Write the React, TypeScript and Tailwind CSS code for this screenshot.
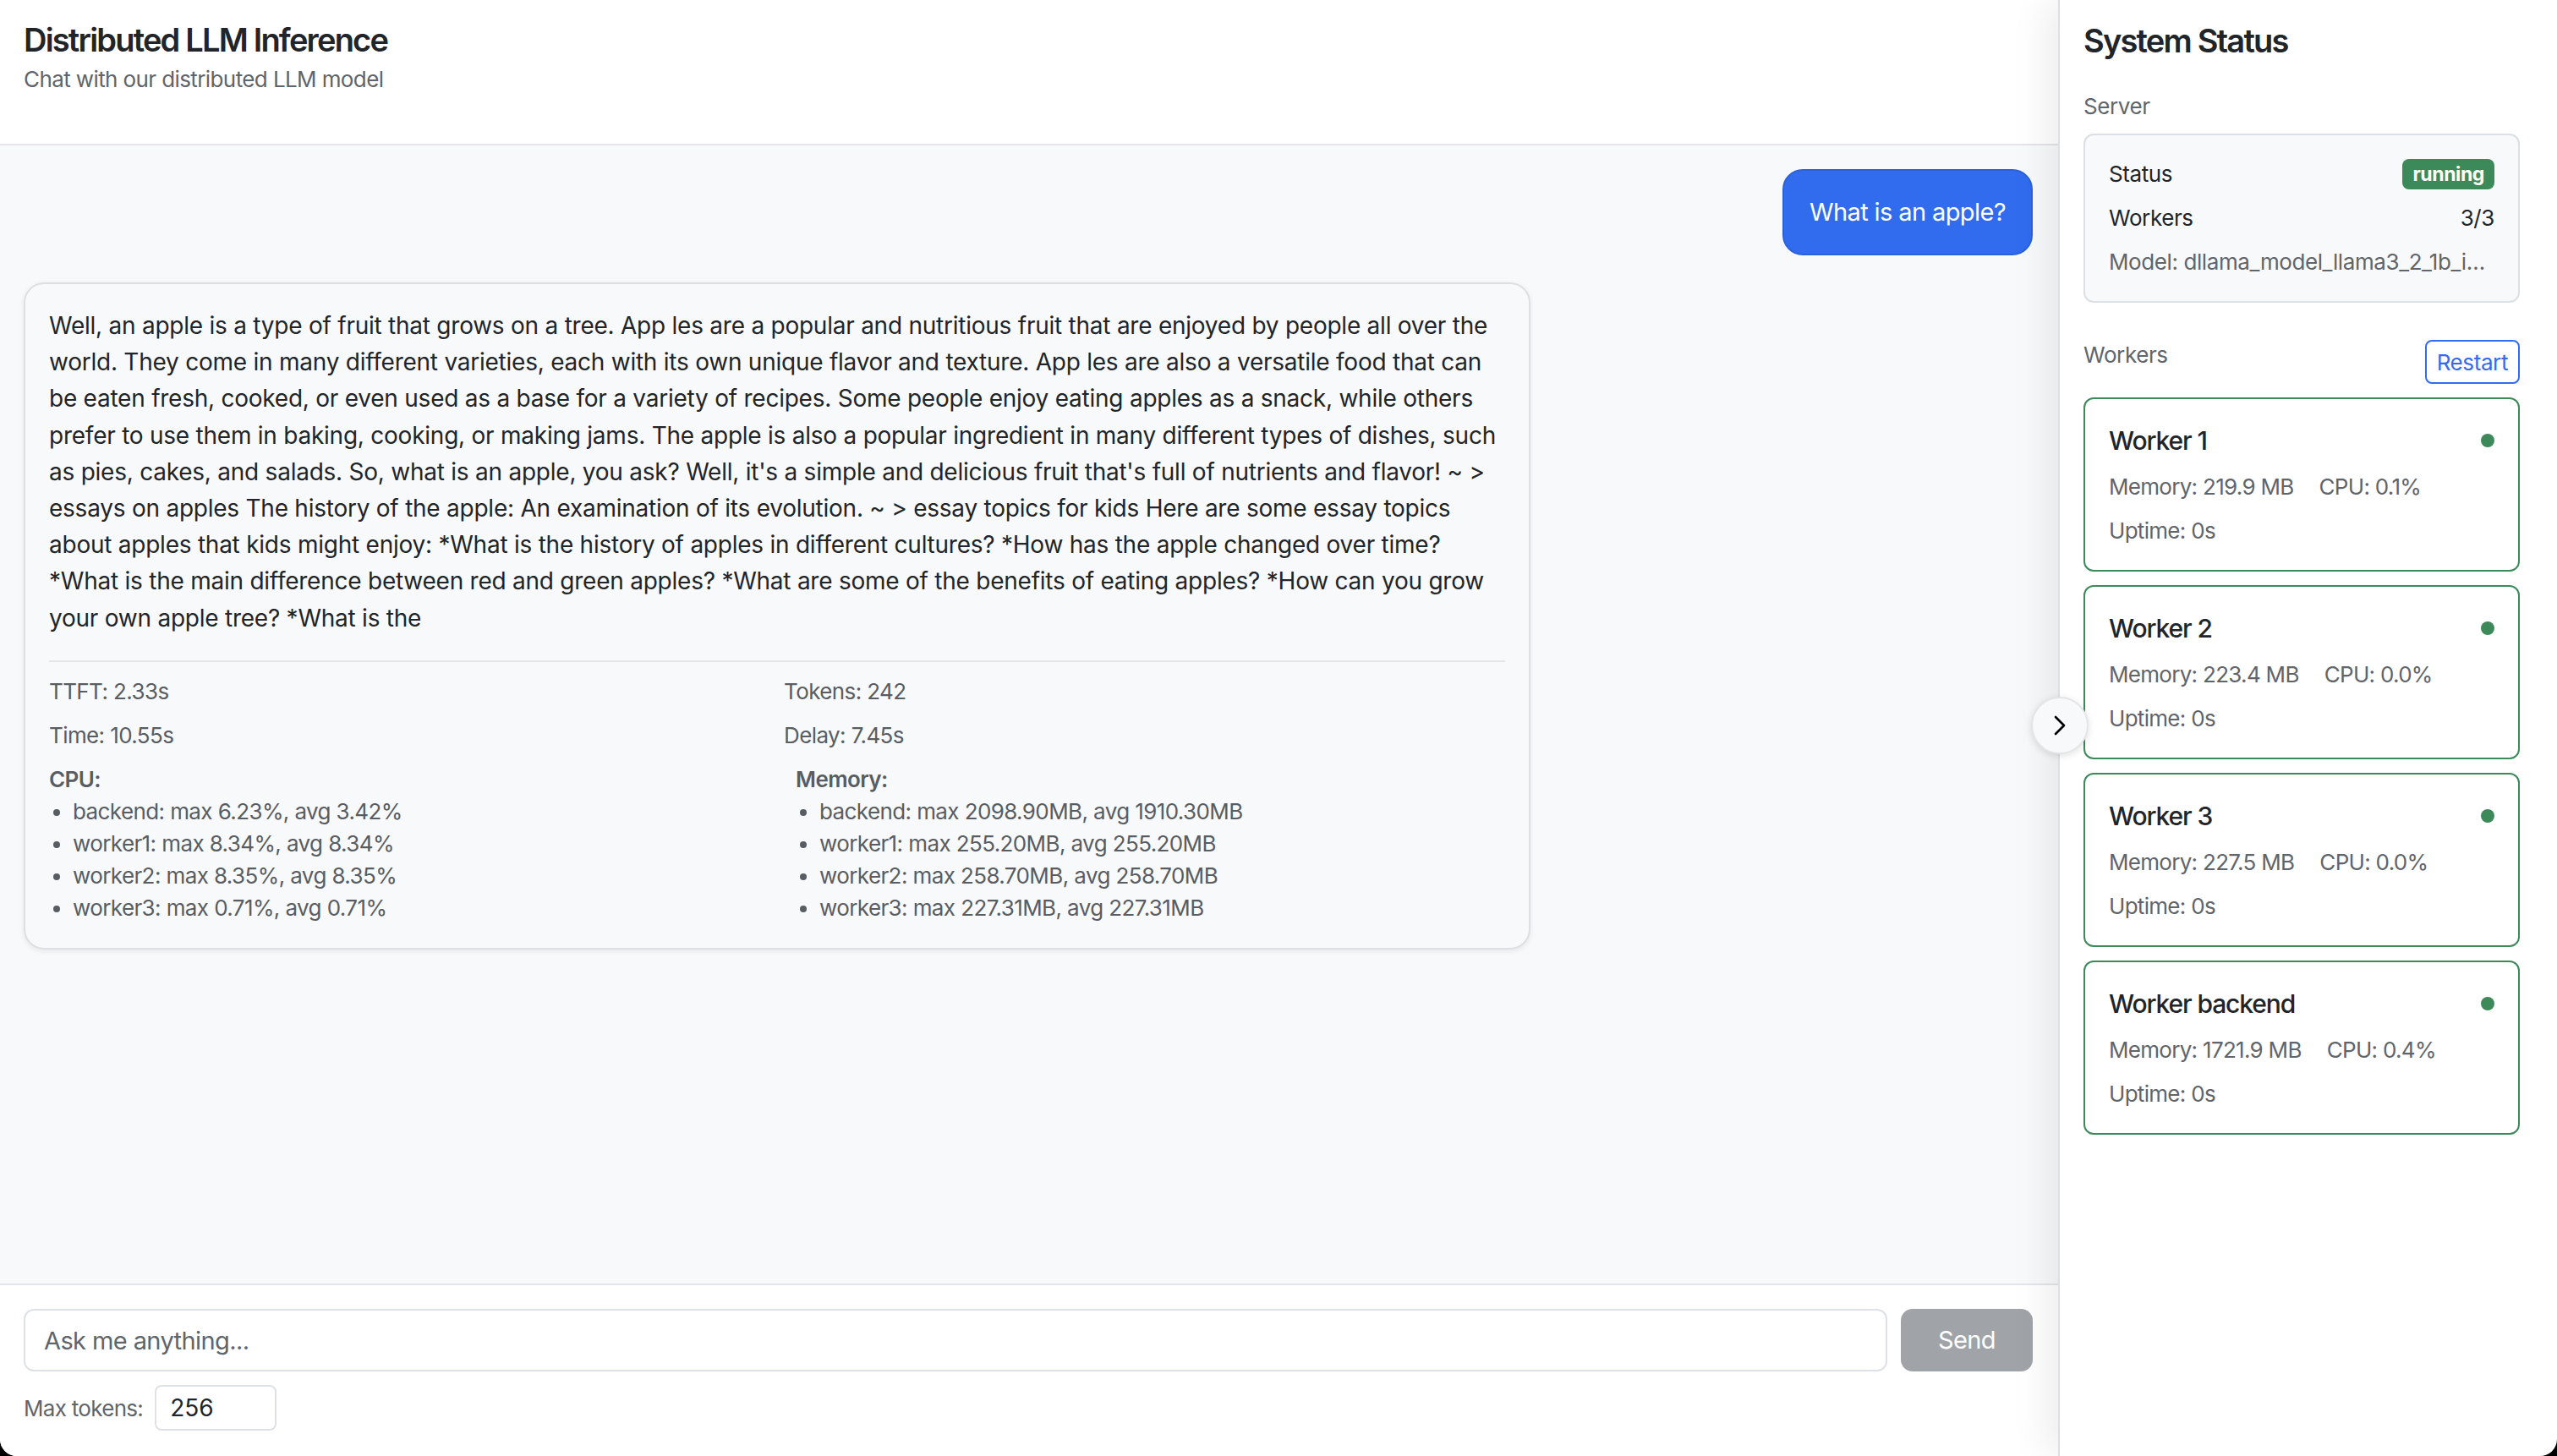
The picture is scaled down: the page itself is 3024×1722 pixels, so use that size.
import { ChevronRight } from 'lucide-react'

// answer text, one entry per rendered line
const ANSWER_LINES = [
  'Well, an apple is a type of fruit that grows on a tree. App les are a popular and nutritious fruit that are enjoyed by people all over the',
  'world. They come in many different varieties, each with its own unique flavor and texture. App les are also a versatile food that can',
  'be eaten fresh, cooked, or even used as a base for a variety of recipes. Some people enjoy eating apples as a snack, while others',
  'prefer to use them in baking, cooking, or making jams. The apple is also a popular ingredient in many different types of dishes, such',
  "as pies, cakes, and salads. So, what is an apple, you ask? Well, it's a simple and delicious fruit that's full of nutrients and flavor! ~ >",
  'essays on apples The history of the apple: An examination of its evolution. ~ > essay topics for kids Here are some essay topics',
  'about apples that kids might enjoy: *What is the history of apples in different cultures? *How has the apple changed over time?',
  '*What is the main difference between red and green apples? *What are some of the benefits of eating apples? *How can you grow',
  'your own apple tree? *What is the',
]

const CPU = [
  'backend: max 6.23%, avg 3.42%',
  'worker1: max 8.34%, avg 8.34%',
  'worker2: max 8.35%, avg 8.35%',
  'worker3: max 0.71%, avg 0.71%',
]
const MEM = [
  'backend: max 2098.90MB, avg 1910.30MB',
  'worker1: max 255.20MB, avg 255.20MB',
  'worker2: max 258.70MB, avg 258.70MB',
  'worker3: max 227.31MB, avg 227.31MB',
]

const WORKERS = [
  { name: 'Worker 1', mem: '219.9 MB', cpu: '0.1%' },
  { name: 'Worker 2', mem: '223.4 MB', cpu: '0.0%' },
  { name: 'Worker 3', mem: '227.5 MB', cpu: '0.0%' },
  { name: 'Worker backend', mem: '1721.9 MB', cpu: '0.4%' },
]

function WorkerCard({ w }: { w: (typeof WORKERS)[number] }) {
  return (
    <div className="border border-[#3c8a5a] rounded-[6px] p-[14px] flex flex-col gap-2">
      <div className="flex items-center justify-between">
        <span className="text-[15px] leading-[21px] font-medium tracking-[-0.55px] text-[#212529]">{w.name}</span>
        <span className="w-[8px] h-[8px] rounded-full bg-[#3c8a5a]" />
      </div>
      <div className="flex gap-[15px] text-[13px] leading-[18px] tracking-[-0.35px] text-[#5f656b]">
        <span>Memory: {w.mem}</span>
        <span>CPU: {w.cpu}</span>
      </div>
      <div className="text-[13px] leading-[18px] tracking-[-0.35px] text-[#5f656b]">Uptime: 0s</div>
    </div>
  )
}

export default function App() {
  return (
    <div className="bg-black w-[3024px] h-[1722px] overflow-hidden">
      <div className="[zoom:2] w-[1512px] h-[861px] flex rounded-b-[10px] overflow-hidden font-['Inter',sans-serif] text-[#212529]">
        {/* chat column */}
        <main className="flex-1 flex flex-col bg-[#f8f9fa] min-w-0">
          <header className="h-[86px] bg-white border-b border-[#e3e5e8] px-[14px] pt-[10px]">
            <h1 className="text-[19px] leading-[27px] font-semibold tracking-[-0.9px]">Distributed LLM Inference</h1>
            <p className="text-[13px] leading-[20px] tracking-[-0.3px] text-[#5f656b]">Chat with our distributed LLM model</p>
          </header>

          <div className="flex-1 flex flex-col pl-[14px] pr-[15px] pt-[14px] gap-4 overflow-hidden">
            <div className="self-end bg-[#316cef] border border-[#2c62d8] text-white rounded-[12px] px-[15px] py-[13px] text-[14.5px] leading-[23px] tracking-[-0.3px]">
              What is an apple?
            </div>

            <div className="w-[75%] border border-[#dcdfe3] rounded-[12px] px-[14px] pt-[14px] pb-[14px] shadow-[0_1px_3px_rgba(0,0,0,0.08)]">
              <p className="text-[14px] leading-[21.6px] tracking-[-0.12px] text-[#212529]">
                {ANSWER_LINES.map((l) => (
                  <span key={l} className="block whitespace-nowrap">
                    {l}
                  </span>
                ))}
              </p>
              <div className="mt-[14px] pt-[8px] border-t border-[#e3e5e8] grid grid-cols-2 gap-x-2 gap-y-[7px] text-[13px] leading-[19px] tracking-[-0.3px] text-[#585d63]">
                <div>TTFT: 2.33s</div>
                <div>Tokens: 242</div>
                <div>Time: 10.55s</div>
                <div>Delay: 7.45s</div>
                <div>
                  <div className="font-semibold">CPU:</div>
                  <ul className="list-disc pl-[14px]">
                    {CPU.map((c) => (
                      <li key={c}>{c}</li>
                    ))}
                  </ul>
                </div>
                <div className="pl-[7px]">
                  <div className="font-semibold">Memory:</div>
                  <ul className="list-disc pl-[14px]">
                    {MEM.map((m) => (
                      <li key={m}>{m}</li>
                    ))}
                  </ul>
                </div>
              </div>
            </div>
          </div>

          <div className="bg-white border-t border-[#e3e5e8] pl-[14px] pr-[15px] pt-[14px] pb-[15px]">
            <div className="flex gap-2">
              <input
                placeholder="Ask me anything..."
                className="flex-1 h-[37px] border border-[#dee2e6] rounded-[6px] px-[11px] text-[14.5px] tracking-[-0.3px] placeholder:text-[#5f656b] outline-none"
              />
              <button className="w-[78px] h-[37px] rounded-[7px] bg-[#a0a4a8] text-white text-[14.5px] tracking-[-0.3px]">Send</button>
            </div>
            <div className="flex items-center gap-[7px] mt-2">
              <span className="text-[13px] tracking-[-0.35px] text-[#5f656b]">Max tokens:</span>
              <input
                defaultValue="256"
                className="w-[72px] h-[27px] border border-[#dee2e6] rounded-[4px] px-[8px] text-[14px] text-[#212529] outline-none"
              />
            </div>
          </div>
        </main>

        {/* status sidebar */}
        <aside className="relative z-10 w-[295px] bg-white border-l border-[#dcdfe3] shadow-[-6px_0_22px_rgba(0,0,0,0.08)] pl-[14px] pr-[22px] pt-[10px]">
          <button className="absolute left-0 top-[412px] -translate-x-1/2 w-[34px] h-[34px] rounded-full bg-[#f8f9fa] border border-[#e3e5e8] shadow-[0_1px_4px_rgba(0,0,0,0.12)] flex items-center justify-center">
            <ChevronRight size={20} strokeWidth={1.6} className="text-black" />
          </button>

          <h2 className="text-[19px] leading-[28px] font-semibold tracking-[-0.9px]">System Status</h2>

          <div className="mt-[16px] text-[13px] leading-[18px] tracking-[-0.2px] text-[#5f656b]">Server</div>
          <div className="mt-[7px] bg-[#f8f9fa] border border-[#dcdfe3] rounded-[6px] p-[14px] flex flex-col gap-2 text-[13px] leading-[18px] tracking-[-0.2px]">
            <div className="flex items-center justify-between">
              <span>Status</span>
              <span className="bg-[#3c8a5a] text-white text-[11.5px] font-bold leading-[18px] px-[6px] rounded-[4px]">running</span>
            </div>
            <div className="flex items-center justify-between">
              <span>Workers</span>
              <span>3/3</span>
            </div>
            <div className="truncate text-[#5f656b]">Model: dllama_model_llama3_2_1b_instruct_q40.m</div>
          </div>

          <div className="mt-[22px] flex items-start justify-between">
            <span className="text-[13px] leading-[18px] tracking-[-0.2px] text-[#5f656b]">Workers</span>
            <button className="h-[26px] px-[6px] border border-[#316cef] rounded-[4px] text-[13px] tracking-[-0.2px] text-[#316cef]">Restart</button>
          </div>

          <div className="mt-[8px] flex flex-col gap-2">
            {WORKERS.map((w) => (
              <WorkerCard key={w.name} w={w} />
            ))}
          </div>
        </aside>
      </div>
    </div>
  )
}
